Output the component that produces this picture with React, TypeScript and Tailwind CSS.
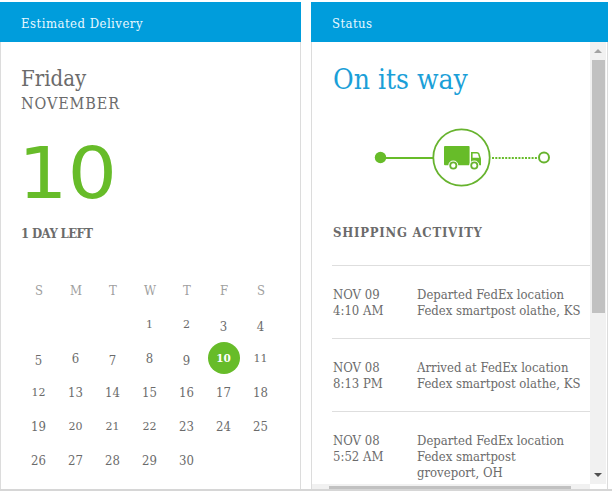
import clsx from 'clsx'

const weekDays = ['S', 'M', 'T', 'W', 'T', 'F', 'S']

const activity = [
  { date: 'NOV 09', time: '4:10 AM', title: 'Departed FedEx location', place: 'Fedex smartpost olathe, KS' },
  { date: 'NOV 08', time: '8:13 PM', title: 'Arrived at FedEx location', place: 'Fedex smartpost olathe, KS' },
  { date: 'NOV 08', time: '5:52 AM', title: 'Departed FedEx location', place: 'Fedex smartpost\ngroveport, OH' },
]

// Old-style figures: 0, 1 and 2 are small, 3, 4, 5, 7 and 9 hang below the baseline
function dayClass(day: number) {
  if (/^[012]+$/.test(String(day))) return "pt-px font-['DejaVu_Serif',serif] text-[11px] [font-stretch:normal]"
  if (/^[34579]+$/.test(String(day))) return 'pt-[3px] text-[13px]'
  return 'text-[13px]'
}

function Calendar() {
  const days = Array.from({ length: 30 }, (_, i) => i + 1)

  return (
    <div className="mt-[30px] -ml-px grid w-[259px] grid-cols-7 text-center">
      {weekDays.map((name, i) => (
        <div key={i} className="flex h-[34px] items-center justify-center pl-px text-[13px] text-[#a0a0a0]">
          {name}
        </div>
      ))}
      {days.map((day) => (
        <div key={day} className={clsx('flex h-[34px] items-center justify-center', day === 1 && 'col-start-4')}>
          {day === 10 ? (
            <span className="mb-[2px] flex size-8 items-center justify-center rounded-full bg-[#67bc29] pt-[2px] font-['DejaVu_Serif',serif] text-[10.5px] font-bold [font-stretch:normal] text-white">
              {day}
            </span>
          ) : (
            <span className={dayClass(day)}>{day}</span>
          )}
        </div>
      ))}
    </div>
  )
}

function Progress() {
  return (
    <svg className="mt-[29px] ml-[41px] block" width="180" height="60" viewBox="0 0 180 60" fill="none">
      <circle cx="7.5" cy="30.5" r="5.7" fill="#67bc29" />
      <path d="M7 31H60" stroke="#67bc29" strokeWidth="2" />
      <circle cx="88.5" cy="30.5" r="28.2" stroke="#67b32e" strokeWidth="1.8" />
      <path d="M119 31H164" stroke="#67bc29" strokeWidth="2" strokeDasharray="2 1.3" />
      <circle cx="171" cy="30.5" r="5" stroke="#67b32e" strokeWidth="2" />
      {/* truck */}
      <rect x="71" y="19" width="25.6" height="19.3" rx="1" fill="#67bc29" />
      <path d="M98 25h6q1.8 0 2.4 1.6l1.6 4.9v6.8H98z" fill="#67bc29" />
      <path d="M99.6 26.5h4.4q.7 0 1 .8l1.2 3.4h-6.6z" fill="#fff" />
      <circle cx="80.3" cy="38.5" r="5" fill="#fff" />
      <circle cx="101.3" cy="38.5" r="5" fill="#fff" />
      <circle cx="80.3" cy="38.5" r="3.1" stroke="#67b32e" strokeWidth="1.8" />
      <circle cx="101.3" cy="38.5" r="3.1" stroke="#67b32e" strokeWidth="1.8" />
    </svg>
  )
}

export default function App() {
  return (
    <div className="h-[492px] w-[612px] overflow-hidden bg-white pt-[2px] font-['DejaVu_Serif_Condensed','DejaVu_Serif',serif] [font-stretch:condensed] text-[#6b6b6b]">
      <div className="flex h-[489px] gap-[10px] border-b-2 border-[#d6d6d6]">
        {/* Estimated delivery */}
        <section className="flex w-[301px] flex-col">
          <header className="flex h-10 items-center bg-[#009ddc] pt-[3px] pl-[21px] text-[13px] tracking-[0.48px] text-[#e8f8ff]">
            Estimated Delivery
          </header>
          <div className="flex-1 border-x border-[#dcdcdc] pl-5">
            <div className="mt-6 text-[22px] leading-[26px]">Friday</div>
            <div className="text-[16px] leading-6 tracking-[0.9px]">NOVEMBER</div>
            <div className="mt-[22px] -ml-[3px] h-[72px] w-20 origin-left scale-x-122 font-['DejaVu_Sans',sans-serif] text-[71px] leading-[72px] text-[#67bc29]">
              10
            </div>
            <div className="mt-[14px] text-[13px] leading-5 font-bold tracking-[-0.6px]">1 DAY LEFT</div>
            <Calendar />
          </div>
        </section>

        {/* Status */}
        <section className="flex w-[297px] flex-col">
          <header className="flex h-10 items-center bg-[#009ddc] pt-[3px] pl-[21px] text-[13px] tracking-[0.4px] text-[#e8f8ff]">
            Status
          </header>
          <div className="flex min-h-0 flex-1 border-x border-[#dcdcdc]">
            <div className="flex w-[278px] flex-col">
              <div className="h-[442px] overflow-hidden pl-5">
                <div className="mt-5 pl-px text-[28px] leading-9 text-[#1b9fd8]">On its way</div>
                <Progress />
                <div className="mt-9 pl-px text-[13px] leading-5 font-bold tracking-[0.75px]">SHIPPING ACTIVITY</div>
                <div className="mt-[22px]">
                  {activity.map((item, i) => (
                    <div key={i} className="flex h-[73px] border-t border-[#dedede] pt-[21px] text-[13px] leading-4">
                      <div className="w-[85px] shrink-0 pl-px">
                        <div>{item.date}</div>
                        <div>{item.time}</div>
                      </div>
                      <div className="w-[172px]">
                        <div>{item.title}</div>
                        <div className="whitespace-pre-line">{item.place}</div>
                      </div>
                    </div>
                  ))}
                </div>
              </div>
              {/* horizontal scrollbar */}
              <div className="h-[5px] bg-[#f1f1f1] pt-[2px] pl-[17px]">
                <div className="h-[3px] w-[242px] bg-[#c1c1c1]" />
              </div>
            </div>
            {/* vertical scrollbar */}
            <div className="flex h-[442px] w-4 flex-col items-center bg-[#f1f1f1]">
              <svg className="my-[7px] block shrink-0" width="8" height="4">
                <path d="M0 4L4 0l4 4z" fill="#a3a3a3" />
              </svg>
              <div className="h-[253px] w-[13px] bg-[#c1c1c1]" />
              <svg className="mt-auto mb-[7px] block shrink-0" width="8" height="4">
                <path d="M0 0l4 4 4-4z" fill="#505050" />
              </svg>
            </div>
          </div>
        </section>
      </div>
    </div>
  )
}
